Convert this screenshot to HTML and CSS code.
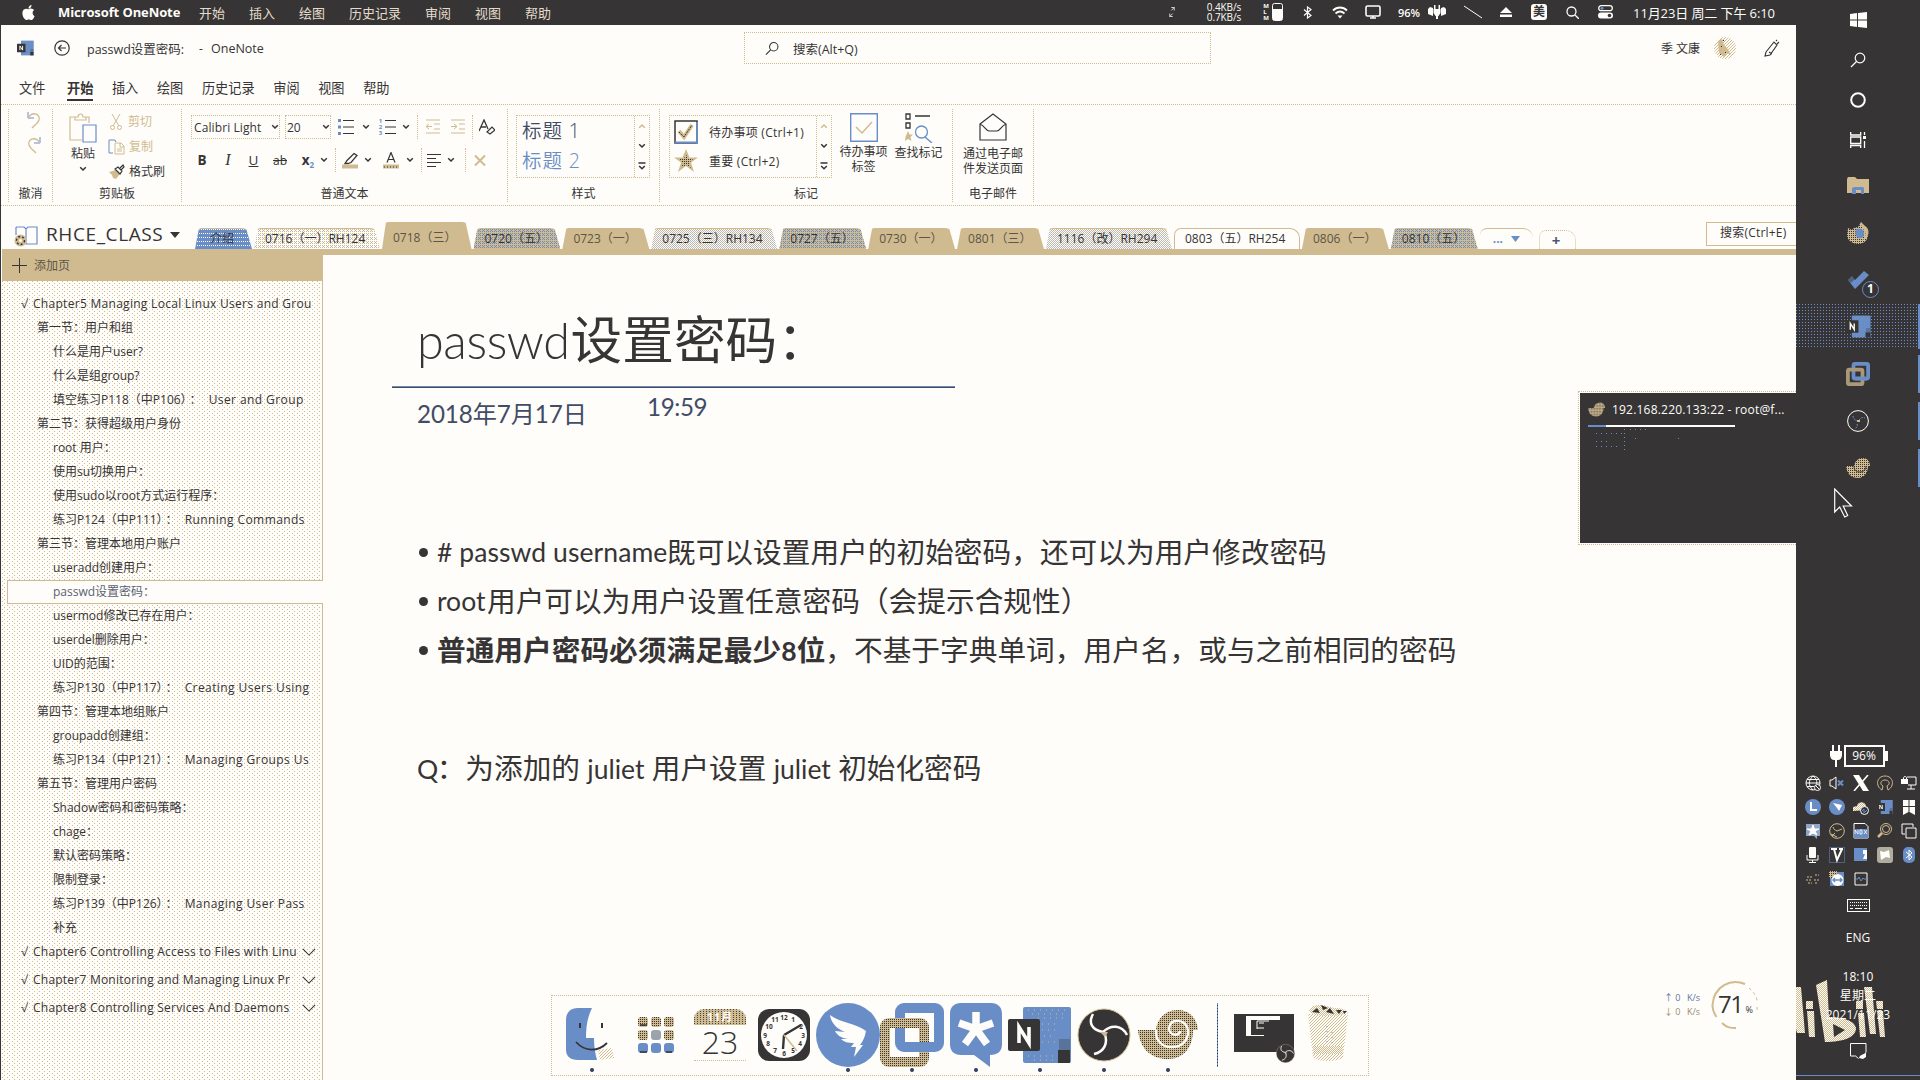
FILE: index.html
```html
<!DOCTYPE html>
<html lang="zh-CN">
<head>
<meta charset="utf-8">
<title>OneNote</title>
<link rel="stylesheet" href="styles.css">
</head>
<body>
<svg class="defs" aria-hidden="true">
  <defs>
    <pattern id="tanDots" width="4" height="4" patternUnits="userSpaceOnUse"><rect width="4" height="4" fill="#d0bb90"/><path d="M0 0h1v1h-1zM2 2h1v1h-1zM2 0h1v1h-1zM0 2h1v1h-1z" fill="#363435"/></pattern>
    <pattern id="tanLight" width="3" height="3" patternUnits="userSpaceOnUse"><path d="M0 0h1v1h-1zM1 2h1v1h-1zM2 1h1v1h-1z" fill="#d0bb90"/></pattern>
    <pattern id="tanMesh" width="2" height="2" patternUnits="userSpaceOnUse"><rect width="2" height="2" fill="#fefdf9"/><path d="M0 0h1v1h-1zM1 1h1v1h-1z" fill="#d0bb90"/></pattern>
  </defs>
  <symbol id="chev" viewBox="0 0 8 6"><path d="M1.2 1.2 4 4l2.800-2.800" fill="none" stroke="currentColor" stroke-width="1.500"/></symbol>
  <symbol id="more" viewBox="0 0 8 9"><path d="M.5 1h7M1.200 4 4 6.800 6.800 4" fill="none" stroke="currentColor" stroke-width="1.500"/></symbol>
  <symbol id="chevWide" viewBox="0 0 16 9"><path d="M1 1l7 7 7-7" fill="none" stroke="currentColor" stroke-width="1.200"/></symbol>
  <symbol id="lens" viewBox="0 0 16 16"><circle cx="10" cy="6" r="4.800" fill="none" stroke="currentColor" stroke-width="1.200"/><path d="M6.500 9.500 1 15" stroke="currentColor" stroke-width="1.300"/></symbol>
  <symbol id="note" viewBox="0 0 64 58"><rect x="15" y="1" width="48" height="56" rx="2" fill="#698ec7"/><path d="M20 4h38M24 8h34M30 12h28M34 18h18M34 24h14M36 30h10M34 36h14M20 50h28M26 54h20" stroke="#d0bb90" stroke-dasharray="1 5"/><path d="M50 44h12v13H50z" fill="#363435"/><path d="M51 33h11v11H51z" fill="#363435" opacity=".3"/><rect y="13" width="32" height="32" rx="2" fill="#363435"/><path d="M11 37V21l10 16V21" fill="none" stroke="#fefdf9" stroke-width="3.600"/></symbol>
  <symbol id="vm" viewBox="0 0 64 64"><rect x="20" y="5" width="39" height="39" rx="4" fill="none" stroke="#698ec7" stroke-width="10"/><rect x="5" y="20" width="39" height="39" rx="4" fill="none" stroke="url(#tanDots)" stroke-width="10"/><path d="M25 44h30" stroke="#698ec7" stroke-width="10"/></symbol>
  <symbol id="obs" viewBox="0 0 54 54"><circle cx="27" cy="27" r="26" fill="#363435" stroke="#d0bb90"/><path d="M16 6c-5 9-1 16 10 18M26 24c8-8 19-7 24 3M27 24c5 11 0 20-10 22" fill="none" stroke="#fefdf9" stroke-width="2.500"/><path d="M23 24h8l-3 5z" fill="#d0bb90"/></symbol>
  <symbol id="shell" viewBox="0 0 60 50"><path d="M0 20h18C19 8 28 0 40 0c11 0 19 8 20 20h-5c0 17-9 29-25 29C13 49 2 39 0 20z" fill="url(#tanDots)"/><path d="M18 20c-1 11 7 18 17 17 9 0 15-7 15-15 0-7-5-12-12-11-6 0-9 8-5 12 3 3 9 2 9-2" fill="none" stroke="#fefdf9" stroke-width="2.400"/></symbol>
  <symbol id="scis" viewBox="0 0 12 16"><path d="M2 0l7 12M10 0 3 12" stroke="currentColor" fill="none"/><circle cx="2.500" cy="13.500" r="2" fill="none" stroke="currentColor"/><circle cx="9.500" cy="13.500" r="2" fill="none" stroke="currentColor"/></symbol>
</svg>

<div class="screen">
  <div class="main">
    <header class="menubar">
      <svg class="apple" viewBox="0 0 24 24"><path fill="#fefdf9" d="M12.152 6.896c-.948 0-2.415-1.078-3.960-1.040-2.040.027-3.910 1.183-4.961 3.014-2.117 3.675-.546 9.103 1.519 12.090 1.013 1.454 2.208 3.090 3.792 3.039 1.520-.065 2.090-.987 3.935-.987 1.831 0 2.350.987 3.960.948 1.637-.026 2.676-1.480 3.676-2.948 1.156-1.688 1.636-3.325 1.662-3.415-.039-.013-3.182-1.221-3.220-4.857-.026-3.040 2.480-4.494 2.597-4.559-1.429-2.090-3.623-2.324-4.390-2.376-2-.156-3.675 1.090-4.610 1.090zM15.530 3.830c.843-1.012 1.400-2.427 1.245-3.830-1.207.052-2.662.805-3.532 1.818-.780.896-1.454 2.338-1.273 3.714 1.338.104 2.715-.688 3.559-1.701"/></svg>
      <b class="appname">Microsoft OneNote</b>
      <nav class="appmenu"><span>开始</span><span>插入</span><span>绘图</span><span>历史记录</span><span>审阅</span><span>视图</span><span>帮助</span></nav>
      <div class="status">
        <svg width="6" height="12" viewBox="0 0 8 14"><path d="M3 1h4v4M7 1 3 5M5 13H1V9M1 13l4-4" fill="none" stroke="#fefdf9"/></svg>
        <span class="net"><span>0.4KB/s</span><span>0.7KB/s</span></span>
        <span class="mlm">M<br>L<br>M</span>
        <svg width="11" height="18" viewBox="0 0 11 18"><rect x=".5" y=".5" width="10" height="17" rx="2" fill="none" stroke="#fefdf9"/><path d="M1 6h9v11H1z" fill="#fefdf9"/></svg>
        <svg width="9" height="13" viewBox="0 0 9 13"><path d="M1 3.500l7 6L4.500 12V1L8 3.500l-7 6" fill="none" stroke="#fefdf9" stroke-width="1.200"/></svg>
        <svg width="16" height="13" viewBox="0 0 16 13"><path d="M1 4.500c4-4 10-4 14 0M3.500 7.500c3-2.600 6-2.600 9 0" fill="none" stroke="#fefdf9" stroke-width="1.800"/><path d="M8 12.500 5.500 9.500h5z" fill="#fefdf9"/></svg>
        <svg width="16" height="14" viewBox="0 0 16 14"><rect x="1" y="1" width="14" height="10" rx="1.500" fill="none" stroke="#fefdf9" stroke-width="1.600"/><path d="M5 13h6M8 11v2" stroke="#fefdf9" stroke-width="1.500"/></svg>
        <span class="pct">96%</span>
        <svg width="18" height="14" viewBox="0 0 18 14"><path d="M0 4l2-2 3 1v8L0 9zM18 4l-2-2-3 1v8l5-2zM5.500 4h7v4l-2 3h-3l-2-3zM6 0h1.500v4H6zM10.500 0H12v4h-1.500zM8 10h2v4H8z" fill="#fefdf9"/></svg>
        <svg width="18" height="14" viewBox="0 0 18 14"><path d="M0 1l18 12" stroke="#fefdf9"/></svg>
        <svg width="12" height="10" viewBox="0 0 12 10"><path d="M6 0l6 6H0zM0 7.500h12V10H0z" fill="#fefdf9"/></svg>
        <span class="ime">美</span>
        <svg width="13" height="13" viewBox="0 0 13 13"><circle cx="5.500" cy="5.500" r="4.500" fill="none" stroke="#fefdf9" stroke-width="1.300"/><path d="M9 9l4 4" stroke="#fefdf9" stroke-width="1.300"/></svg>
        <svg width="15" height="14" viewBox="0 0 15 14"><rect x=".7" y=".7" width="13.600" height="5" rx="2.500" fill="none" stroke="#fefdf9" stroke-width="1.300"/><rect y="7.500" width="15" height="6" rx="3" fill="#fefdf9"/><circle cx="4" cy="3.200" r="1.500" fill="#698ec7"/><circle cx="11.500" cy="10.500" r="1.800" fill="#363435"/></svg>
        <span class="date">11月23日 周二 下午 6:10</span>
      </div>
    </header>

    <div class="titlebar">
      <svg class="t-logo" width="17" height="16" viewBox="0 0 64 58"><use href="#note"/></svg>
      <svg class="t-back" width="16" height="16" viewBox="0 0 16 16"><circle cx="8" cy="8" r="7.200" fill="none" stroke="#363435" stroke-width="1.200"/><path d="M12 8H4.500M7.500 5l-3 3 3 3" fill="none" stroke="#363435" stroke-width="1.200"/></svg>
      <span class="t-doc">passwd设置密码:</span><span class="t-dash">-</span><span class="t-app">OneNote</span>
      <div class="t-search"><svg width="14" height="15"><use href="#lens"/></svg><span>搜索(Alt+Q)</span></div>
      <span class="t-user">季 文康</span>
      <svg class="t-avatar" width="22" height="24" viewBox="0 0 22 24"><circle cx="11" cy="12" r="11" fill="url(#tanLight)"/><path d="M4 5l4-2 2 6 3 3 4 7-4-2-3 4-5-4z" fill="#d0bb90"/><path d="M7 10h1v1h-1zM11 16h1v1h-1zM6 18h1v1h-1zM9 4h1v1h-1z" fill="#363435"/></svg>
      <svg class="t-pen" width="17" height="18" viewBox="0 0 17 18"><path d="M2 13 10 3l3 3-7 10-5 1zM5 13l3 2M12 1l1 1M15 3l-2 2" fill="none" stroke="#363435" stroke-width="1.100"/></svg>
    </div>

    <nav class="tabs"><span>文件</span><span class="on">开始</span><span>插入</span><span>绘图</span><span>历史记录</span><span>审阅</span><span>视图</span><span>帮助</span></nav>

    <section class="ribbon">
      <div class="grp">
        <div class="body undo">
          <svg width="16" height="18" viewBox="0 0 16 18"><path d="M2 1v6h6" fill="none" stroke="#698ec7"/><path d="M2 7c5-8 13-3 11 2-1 3-4 5-7 8" fill="none" stroke="#d0bb90" stroke-width="1.300"/></svg>
          <svg width="16" height="18" viewBox="0 0 16 18"><path d="M14 1v6H8" fill="none" stroke="#698ec7"/><path d="M14 7C9-1 1 4 3 9c1 3 4 5 7 8" fill="none" stroke="#d0bb90" stroke-width="1.300"/></svg>
        </div>
        <div class="label">撤消</div>
      </div>
      <div class="grp">
        <div class="body clip">
          <div class="big"><svg width="28" height="31" viewBox="0 0 28 31"><path d="M7 4H1v23h12M20 10V4h-5M6 7V4h3c0-4 5-4 5 0h3v3z" fill="none" stroke="#d0bb90" stroke-width="1.200"/><path d="M14 12h13v17H14z" fill="#fefdf9" stroke="#698ec7" stroke-width="1.200"/></svg><span>粘贴</span><svg class="chev"><use href="#chev"/></svg></div>
          <div class="list">
            <div class="off"><svg width="16" height="16" viewBox="-2 0 16 16"><use href="#scis" width="12" height="16"/></svg>剪切</div>
            <div class="off"><svg width="17" height="16" viewBox="0 0 17 16"><path d="M5 14H1V1h6l1 2" fill="none" stroke="#698ec7"/><path d="M7 4h6l3 3v8H7zM12 4v4h4M9 10h5M9 12h5" fill="none" stroke="#d0bb90"/></svg>复制</div>
            <div><svg width="17" height="16" viewBox="0 0 17 16"><path d="M1 8l7-2 4 4-4 5-3-1-1-3z" fill="#d0bb90"/><path d="M7 5l5 5 2-3-4-4zM12 4l3-3 1 2-3 3" fill="#fefdf9" stroke="#363435" stroke-width="1.200"/></svg>格式刷</div>
          </div>
        </div>
        <div class="label">剪贴板</div>
      </div>
      <div class="grp">
        <div class="body text">
          <div class="row r1">
            <div class="combo font"><span>Calibri Light</span><svg class="chev"><use href="#chev"/></svg></div>
            <div class="combo size"><span>20</span><svg class="chev"><use href="#chev"/></svg></div>
            <svg class="ic" viewBox="0 0 16 16"><path d="M0 0h3v3H0zM0 6.500h3v3H0zM0 13h3v3H0z" fill="#698ec7"/><path d="M5 1.500h11M5 8h11M5 14.500h11" stroke="#363435"/></svg>
            <svg class="chev"><use href="#chev"/></svg>
            <div class="nums"><span>1<br>2<br>3</span><svg width="11" height="16" viewBox="0 0 11 16"><path d="M0 1.500h11M0 8h11M0 14.500h11" stroke="#363435"/></svg></div>
            <svg class="chev"><use href="#chev"/></svg>
            <i></i>
            <svg class="ic" viewBox="0 0 16 16"><path d="M1 1h14M9 5h6M9 10h6M1 14h14M7 7.500H1M4 5 1 7.500 4 10" fill="none" stroke="#d0bb90"/></svg>
            <svg class="ic" viewBox="0 0 16 16"><path d="M1 1h14M9 5h6M9 10h6M1 14h14M1 7.500h6M4 5l3 2.500L4 10" fill="none" stroke="#d0bb90"/></svg>
            <i></i>
            <svg class="ic" viewBox="0 0 16 16"><path d="M0 12 5 1l4 9M2 8h5" fill="none" stroke="#363435" stroke-width="1.300"/><path d="M8 13l5-5 3 3-5 4z" fill="none" stroke="#363435" stroke-width="1.200"/></svg>
          </div>
          <div class="row r2">
            <b>B</b><em>I</em><u>U</u><s>ab</s><b class="sub">x<small>2</small></b><svg class="chev"><use href="#chev"/></svg>
            <i></i>
            <svg class="ic" viewBox="0 0 16 16"><path d="M5 8l7-7 3 2-6 7-3 1-3 0z" fill="none" stroke="#363435" stroke-width="1.300"/><path d="M0 12h16v4H0z" fill="#d0bb90"/></svg>
            <svg class="chev"><use href="#chev"/></svg>
            <svg class="ic" viewBox="0 0 16 16"><path d="M4 10 8 0l4 10M5.500 7h5" fill="none" stroke="#363435" stroke-width="1.200"/><path d="M0 12h16v4H0z" fill="#d0bb90"/><path d="M1 14.500h14" stroke="#363435" stroke-dasharray="1 2"/></svg>
            <svg class="chev"><use href="#chev"/></svg>
            <i></i>
            <svg class="ic" viewBox="0 0 16 16"><path d="M1 2h14M1 6h9M1 10h14M1 14h9" stroke="#363435" stroke-width="1.200"/></svg>
            <svg class="chev"><use href="#chev"/></svg>
            <i></i>
            <svg class="ic x" viewBox="0 0 16 16"><path d="M3 3l10 10M13 3 3 13" stroke="#d0bb90" stroke-width="2"/></svg>
          </div>
        </div>
        <div class="label">普通文本</div>
      </div>
      <div class="grp">
        <div class="body pad">
          <div class="gallery styles">
            <div class="opts"><span class="h1">标题 1</span><span class="h2">标题 2</span></div>
            <div class="scroll"><svg class="chev up"><use href="#chev"/></svg><svg class="chev"><use href="#chev"/></svg><svg class="mr"><use href="#more"/></svg></div>
          </div>
        </div>
        <div class="label">样式</div>
      </div>
      <div class="grp">
        <div class="body pad marks">
          <div class="gallery tags">
            <div class="opts">
              <span><svg width="24" height="24" viewBox="0 0 24 24"><path d="M1 1h22v22H1z" fill="none" stroke="#363435" stroke-width="1.500"/><path d="M1 22.500h22V2" fill="none" stroke="#698ec7" stroke-width="1.800"/><path d="M5 11l5 6 8-12" fill="none" stroke="#d0bb90" stroke-width="4"/><path d="M5 12l5 5 8-12" fill="none" stroke="#363435" stroke-dasharray="2 1"/></svg>待办事项 (Ctrl+1)</span>
              <span><svg width="24" height="24" viewBox="0 0 24 24"><path d="M12 0l3.500 8.500H24l-7 5 3 9.500-8-6-8 6 3-9.500-7-5h8.500z" fill="#d0bb90"/><path d="M12 5l2 5h5l-4 4 2 5-5-3-5 3 2-5-4-4h5z" fill="url(#tanDots)"/></svg>重要 (Ctrl+2)</span>
            </div>
            <div class="scroll"><svg class="chev up"><use href="#chev"/></svg><svg class="chev"><use href="#chev"/></svg><svg class="mr"><use href="#more"/></svg></div>
          </div>
          <div class="big"><svg width="28" height="29" viewBox="0 0 28 29"><path d="M.7.700h26.600v27.600H.7z" fill="none" stroke="#698ec7" stroke-width="1.400"/><path d="M6 14l6 6L22 9" fill="none" stroke="#d0bb90" stroke-width="1.500"/></svg><span>待办事项<br>标签</span></div>
          <div class="big"><svg width="28" height="30" viewBox="0 0 28 30"><path d="M1 1h4v5H1zM1 10h4v5H1zM10 3h15" fill="none" stroke="#363435" stroke-width="1.300"/><path d="M3 18l1.500 3.500H8L5.500 24l1 4L3 26l-3 2 .5-4z" fill="#d0bb90"/><circle cx="16.500" cy="19" r="6" fill="none" stroke="#698ec7" stroke-width="1.300"/><path d="M20 24l7 6" stroke="#698ec7" stroke-width="1.400"/></svg><span>查找标记</span></div>
        </div>
        <div class="label">标记</div>
      </div>
      <div class="grp">
        <div class="body mail">
          <div class="big"><svg width="28" height="28" viewBox="0 0 28 28"><path d="M1 11 14 1l13 10v16H1zM1 11c5 2 6 7 9 7h8c3 0 4-5 9-7" fill="none" stroke="#363435" stroke-width="1.200"/></svg><span>通过电子邮<br>件发送页面</span></div>
        </div>
        <div class="label">电子邮件</div>
      </div>
    </section>

    <div class="strip">
      <div class="book">
        <svg width="25" height="23" viewBox="0 0 25 23"><path d="M2 3h8l2 2 2-2h9v17H12V5M2 3v8" fill="none" stroke="#698ec7" stroke-width="1.200"/><circle cx="6.500" cy="16.500" r="6" fill="#d0bb90"/><circle cx="6.500" cy="16.500" r="4" fill="none" stroke="#363435" stroke-width="1.400" stroke-dasharray="2 2"/><circle cx="6.500" cy="16.500" r="1.500" fill="#fefdf9"/></svg>
        <span>RHCE_CLASS</span><svg width="10" height="6" viewBox="0 0 10 6"><path d="M0 0h10L5 6z" fill="#363435"/></svg>
      </div>
      <div class="sections">
        <span class="tab w1 blue"><em>介绍</em></span>
        <span class="tab w3 mix"><em>0716（一）RH124</em></span>
        <span class="tab w2 tan on"><em>0718（三）</em></span>
        <span class="tab w2 slate"><em>0720（五）</em></span>
        <span class="tab w2 tan"><em>0723（一）</em></span>
        <span class="tab w3 mix2"><em>0725（三）RH134</em></span>
        <span class="tab w2 slate"><em>0727（五）</em></span>
        <span class="tab w2 tan"><em>0730（一）</em></span>
        <span class="tab w2 tan"><em>0801（三）</em></span>
        <span class="tab w3 mix2"><em>1116（改）RH294</em></span>
        <span class="tab w3 plain"><em>0803（五）RH254</em></span>
        <span class="tab w2 tan"><em>0806（一）</em></span>
        <span class="tab w2 slate"><em>0810（五）</em></span>
        <span class="tab dots"><em>...</em><svg width="9" height="6" viewBox="0 0 9 6"><path d="M0 0h9L4.500 6z" fill="#698ec7"/></svg></span>
        <span class="tab plus"><em>+</em></span>
      </div>
      <div class="psearch">搜索(Ctrl+E)</div>
    </div>

    <div class="work">
      <aside class="pages">
        <div class="add"><svg width="15" height="15" viewBox="0 0 15 15"><path d="M7.500 0v15M0 7.500h15" stroke="#363435"/></svg>添加页</div>
        <ul>
          <li class="l1"><i>√</i>Chapter5 Managing Local Linux Users and Grou</li>
          <li class="l2">第一节：用户和组</li>
          <li>什么是用户user?</li>
          <li>什么是组group?</li>
          <li>填空练习P118（中P106）<span class="co">：</span><span class="en">User and Group</span></li>
          <li class="l2">第二节：获得超级用户身份</li>
          <li>root 用户：</li>
          <li>使用su切换用户：</li>
          <li>使用sudo以root方式运行程序：</li>
          <li>练习P124（中P111）<span class="co">：</span><span class="en">Running Commands</span></li>
          <li class="l2">第三节：管理本地用户账户</li>
          <li>useradd创建用户：</li>
          <li class="sel">passwd设置密码：</li>
          <li>usermod修改已存在用户：</li>
          <li>userdel删除用户：</li>
          <li>UID的范围：</li>
          <li>练习P130（中P117）<span class="co">：</span><span class="en">Creating Users Using</span></li>
          <li class="l2">第四节：管理本地组账户</li>
          <li>groupadd创建组：</li>
          <li>练习P134（中P121）<span class="co">：</span><span class="en">Managing Groups Us</span></li>
          <li class="l2">第五节：管理用户密码</li>
          <li>Shadow密码和密码策略：</li>
          <li>chage：</li>
          <li>默认密码策略：</li>
          <li>限制登录：</li>
          <li>练习P139（中P126）<span class="co">：</span><span class="en">Managing User Pass</span></li>
          <li>补充</li>
          <li class="l1 ch"><i>√</i>Chapter6 Controlling Access to Files with Linu<svg class="cw"><use href="#chevWide"/></svg></li>
          <li class="l1 ch"><i>√</i>Chapter7 Monitoring and Managing Linux Pr<svg class="cw"><use href="#chevWide"/></svg></li>
          <li class="l1 ch"><i>√</i>Chapter8 Controlling Services And Daemons<svg class="cw"><use href="#chevWide"/></svg></li>
        </ul>
      </aside>
      <article class="page">
        <h1><span class="lt">passwd</span>设置密码：</h1>
        <div class="stamp"><span class="d">2018年7月17日</span><span class="h">19:59</span></div>
        <ul class="bul">
          <li><span class="a1"># passwd username</span>既可以设置用户的初始密码，还可以为用户修改密码</li>
          <li><span class="a2">root</span>用户可以为用户设置任意密码（会提示合规性）</li>
          <li><b>普通用户密码必须满足最少<span class="a3">8</span>位</b>，不基于字典单词，用户名，或与之前相同的密码</li>
        </ul>
        <p class="q"><span class="a4">Q</span>：为添加的 <span class="a5">juliet</span> 用户设置 <span class="a5">juliet</span> 初始化密码</p>
      </article>
    </div>
  </div>

  <aside class="taskbar">
    <div class="top">
      <span><svg width="17" height="16" viewBox="0 0 17 16"><path d="M0 2l7-1v6.500H0zM8 1l9-1v7.500H8zM0 8.500h7V15l-7-1zM8 8.500h9V16l-9-1z" fill="#fefdf9"/></svg></span>
      <span><svg class="w" width="16" height="16"><use href="#lens"/></svg></span>
      <span><svg width="16" height="16" viewBox="0 0 16 16"><circle cx="8" cy="8" r="6.800" fill="none" stroke="#fefdf9" stroke-width="2"/></svg></span>
      <span><svg width="16" height="16" viewBox="0 0 16 16"><path d="M.7 5h10v6.500H.7zM.7 0v3h10V0M.7 16v-2.500h10V16M14.500 0v3M14.500 9v7" fill="none" stroke="#fefdf9" stroke-width="1.300"/><path d="M13 4h3v3h-3z" fill="#fefdf9"/></svg></span>
    </div>
    <div class="apps">
      <span><svg width="22" height="19" viewBox="0 0 22 19"><path d="M1 1h7l2 2h12v14H0V3z" fill="#d0bb90"/><path d="M5 18v-6l2-1h9l1 1v6h-3v-4H9v4z" fill="#698ec7"/></svg></span>
      <span><svg width="22" height="24" viewBox="0 0 22 24"><path d="M1 7l4 2c1-2 4-3 6-3L14 1c2 5 8 8 7 14s-6 8-10 8S0 20 0 14z" fill="url(#tanDots)"/><path d="M9 8c5-2 9 2 8 6s-5 4-7 2l-2-4z" fill="#698ec7"/><path d="M14 1c0 5 1 6 4 9 1 3 0 6-2 9 8-4 6-12 2-14z" fill="#d0bb90"/></svg></span>
      <span class="todo"><svg width="22" height="19" viewBox="0 0 22 19"><path d="M1 10l4-4 3 4L17 1l5 4L8 19z" fill="#698ec7"/><path d="M1 10l4-4 3 3-4 4z" fill="#363435" opacity=".5"/></svg><b>1</b></span>
      <span class="act bar"><svg width="25" height="23"><use href="#note"/></svg></span>
      <span class="bar"><svg width="24" height="24"><use href="#vm"/></svg></span>
      <span class="bar"><svg width="22" height="22" viewBox="0 0 22 22"><circle cx="11" cy="11" r="10.400" fill="none" stroke="#fefdf9"/><path d="M6 6c0 3 2 4 5 5M12 10c3-3 4-3 6-2M10 14c1 2 0 3-2 5" fill="none" stroke="#698ec7" stroke-dasharray="2 1"/><path d="M10 10h3v2h-3z" fill="#d0bb90"/></svg></span>
      <span class="bar"><svg width="24" height="20" viewBox="0 0 24 20"><path d="M0 8h8c1-5 4-8 9-8 4 0 7 3 7 8h-2c0 7-4 12-10 12C5 20 1 16 0 8z" fill="url(#tanDots)"/><path d="M8 8c0 4 2 6 6 6s6-3 6-6" fill="none" stroke="#363435"/></svg></span>
    </div>
    <div class="tray">
      <div class="bat"><svg width="12" height="22" viewBox="0 0 12 22"><path d="M2 0h2v6h4V0h2v6h2v4c0 3-2 5-4 5H7v7H5v-7H4c-2 0-4-2-4-5V6h2z" fill="#fefdf9"/></svg><span>96%</span></div>
      <div class="icons">
        <svg viewBox="0 0 16 16"><circle cx="8" cy="8" r="7" fill="none" stroke="#fefdf9"/><path d="M1 8h14M2 4.500h12M2 11.500h7M8 1c-5 5-5 9 0 14M8 1c4 3 4 6 3.500 8" fill="none" stroke="#fefdf9"/><circle cx="12.500" cy="12.500" r="3" fill="#363435" stroke="#fefdf9"/><path d="M10.500 10.500l4 4" stroke="#fefdf9"/></svg>
        <svg viewBox="0 0 16 16"><path d="M1 5h2l4-3v12l-4-3H1z" fill="none" stroke="#fefdf9"/><path d="M9 5.500l5 5M14 5.500l-5 5" stroke="#698ec7" stroke-width="2"/></svg>
        <svg viewBox="0 0 16 16"><path d="M0 0h6l10 16h-6z" fill="#fefdf9"/><path d="M15 0 9 7M7 9l-6 7" stroke="#fefdf9" stroke-width="1.600"/></svg>
        <svg viewBox="0 0 16 16"><path d="M5 15C-2 11-.500 1 8 1s10 10 3 14l-1-4c4-2 2-6-2-6s-6 4-2 6z" fill="none" stroke="#d0bb90"/></svg>
        <svg viewBox="0 0 16 16"><path d="M6 2h9v8H7M10 10v4M6 14h8M2.500 5V3c0-2 3-2 3 0v2" fill="none" stroke="#fefdf9"/><path d="M0 4h7v5H0z" fill="#fefdf9"/></svg>
        <svg viewBox="0 0 16 16"><circle cx="8" cy="8" r="8" fill="#698ec7"/><path d="M6 3v8h6" fill="none" stroke="#fefdf9" stroke-width="2"/></svg>
        <svg viewBox="0 0 16 16"><circle cx="8" cy="8" r="8" fill="#698ec7"/><path d="M4 4l9 2-3 6-2-3z" fill="#fefdf9"/></svg>
        <svg viewBox="0 0 16 16"><path d="M0 12V8l4-1c1-5 8-5 9 0l1 4z" fill="url(#tanMesh)"/><circle cx="11.500" cy="11.500" r="4" fill="#363435" stroke="#fefdf9"/><path d="M9 12l2-2v4l3-3" fill="none" stroke="#698ec7"/></svg>
        <svg viewBox="0 0 64 58"><use href="#note"/></svg>
        <svg viewBox="0 0 16 16"><path d="M2 1h5.500v6H2zM8.500 1H14v6H8.500zM2 8h5.500v5L2 16zM8.500 8H14v8l-5.500-3z" fill="#fefdf9"/></svg>
        <svg viewBox="0 0 16 16"><path d="M1 1h14v12h-3v3l-3-3H1z" fill="#8fa6c8"/><path d="M8 2l1.500 4H14l-4 2 2 4-4-2-4 2 2-4-4-2h4.500z" fill="#fefdf9" stroke="#fefdf9"/></svg>
        <svg viewBox="0 0 16 16"><circle cx="8" cy="8" r="7.300" fill="none" stroke="#d0bb90"/><path d="M4 4c1 3 2 3 4 4l5-2M2 11l6 3M3 13l3-3" fill="none" stroke="#d0bb90"/></svg>
        <svg viewBox="0 0 16 16"><path d="M1 .500h11l3 3V15H1z" fill="none" stroke="#fefdf9"/><path d="M1 6h14v9H1z" fill="#698ec7"/><path d="M2 11V7l3 4V7M7 7h2v4H7zM11 7l3 4M14 7l-3 4" fill="none" stroke="#fefdf9" stroke-width=".8"/></svg>
        <svg viewBox="0 0 16 16"><circle cx="9" cy="6" r="5.500" fill="none" stroke="#d0bb90"/><circle cx="9" cy="6" r="3.500" fill="none" stroke="#d0bb90"/><path d="M5 10l-4 4" stroke="#d0bb90" stroke-width="2.500"/></svg>
        <svg viewBox="0 0 16 16"><path d="M4 11H1V1h11v3M5 5h10v10H5z" fill="none" stroke="#fefdf9"/></svg>
        <svg viewBox="0 0 16 16"><rect x="4" y="0" width="7" height="11" rx="1" fill="#fefdf9"/><path d="M2 8v5h11V8M7.500 13v3M4 15.500h7" fill="none" stroke="#fefdf9"/></svg>
        <svg viewBox="0 0 16 16"><rect x=".5" y=".5" width="15" height="15" fill="none" stroke="#698ec7" stroke-dasharray="1 1"/><path d="M2 2h6M5 2l3 11 5-11M10 2h4" fill="none" stroke="#fefdf9" stroke-width="2"/></svg>
        <svg viewBox="0 0 16 16"><path d="M1 1h13v13H1z" fill="#698ec7"/><path d="M10 3h4v9h-4l2-5h-2z" fill="#fefdf9"/></svg>
        <svg viewBox="0 0 16 16"><rect width="16" height="16" rx="3" fill="#b0ad9f"/><path d="M3 4l4 1 5-2 1 8-4-1-5 3z" fill="#fefdf9"/></svg>
        <svg viewBox="0 0 16 16"><rect x="2" width="12" height="16" rx="5" fill="#698ec7"/><path d="M5 5l6 5-3 3V3l3 3-6 5" fill="none" stroke="#fefdf9"/></svg>
        <svg viewBox="0 0 16 16"><path d="M2 6h5M10 4h4M1 9h6M9 9h5M3 12h4M10 12h3" stroke="#d0bb90" stroke-dasharray="2 1"/></svg>
        <svg viewBox="0 0 16 16"><path d="M1 1h14v14H1z" fill="#698ec7"/><circle cx="8.500" cy="9" r="6" fill="#fefdf9"/><path d="M4 9h9M6 7 4 9l2 2M11 7l2 2-2 2" fill="none" stroke="#698ec7" stroke-width="1.500"/><path d="M0 0h8v4H4v3H0z" fill="url(#tanDots)"/></svg>
        <svg viewBox="0 0 16 16"><path d="M2 2h12v12H2z" fill="none" stroke="#fefdf9"/><path d="M3 8h2l1-2 2 4 2-3 1 1h3" fill="none" stroke="#698ec7"/></svg>
      </div>
      <svg class="kb" width="23" height="13" viewBox="0 0 23 13"><rect x=".5" y=".5" width="22" height="12" fill="none" stroke="#fefdf9"/><path d="M3 3.500h17M3 6.500h17" stroke="#fefdf9" stroke-dasharray="1 1"/><path d="M3 9.500h3M8 9.500h7M17 9.500h3" stroke="#fefdf9"/></svg>
      <div class="eng">ENG</div>
      <div class="clock"><span>18:10</span><span>星期二</span><span>2021/11/23</span></div>
      <svg class="act-c" width="17" height="16" viewBox="0 0 17 16"><path d="M.5.500h15.500v9M.5.500v12.500h5l3 2.500" fill="none" stroke="#fefdf9"/><path d="M9 15c1-4 5-3 7-6v5l-3 2z" fill="#fefdf9"/></svg>
    </div>
    <svg class="mark" width="92" height="66" viewBox="0 0 92 66"><g fill="url(#tanMesh)"><path d="M0 8h5l4 46H1L0 50zM10 22h7v8h-7zM11 32h7l1 26h-6zM20 6l11-5 2 37c14 0 26 4 27 11 0 9-12 14-31 14zM62 34h6l2 24h-6zM68 8h8l4 47h-6zM60 22h7v8h-7zM80 22h7v8h-6zM81 32h6l2 26h-5z"/></g><path d="M37 45l12 6-11 7z" fill="#363435"/></svg>
  </aside>

  <div class="popup">
    <div class="p-head"><svg width="17" height="15" viewBox="0 0 24 20"><path d="M0 8h8c1-5 4-8 9-8 4 0 7 3 7 8h-2c0 7-4 12-10 12C5 20 1 16 0 8z" fill="url(#tanDots)"/></svg><span>192.168.220.133:22 - root@f...</span></div>
    <div class="p-line"></div>
    <svg class="p-term" width="110" height="26" viewBox="0 0 110 26"><path d="M0 5.500h28M0 13.500h12M0 18.500h22M34 1.500h20M39 10.500h2M82 10.500h2" stroke="#698ec7" stroke-dasharray="1 4"/><path d="M28.500 1v24" stroke="#698ec7" stroke-dasharray="1 3"/></svg>
  </div>

  <svg class="cursor" width="19" height="31" viewBox="0 0 19 31"><path d="M.7 1v23l5-5 5 10 3-1.500-4.500-9.500H17.500z" fill="#363435" stroke="#fefdf9" stroke-width="1.200"/></svg>

  <div class="meter">
    <div class="kps"><span class="upl">↑ 0<em>K/s</em></span><span class="dnl">↓ 0<em>K/s</em></span></div>
    <div class="ring"><svg width="48" height="50" viewBox="0 0 48 50"><path d="M34 4C20-2 3 6 1.500 25c0 5 2 9 4 12M11 43c5 5 9 5 14 5" fill="none" stroke="#d0bb90" stroke-width="2"/><path d="M38 8c5 4 8 9 8 13M46 27v4" fill="none" stroke="#d0bb90" stroke-dasharray="3 3"/></svg><span>71<small>%</small></span></div>
  </div>

  <div class="dock">
    <span class="run"><svg width="52" height="54" viewBox="0 0 52 54"><path d="M12 0h14c-5 10-6 20-6 30h8c0 8 1 15 3 22H12C4 52 0 48 0 42V12C0 5 4 0 12 0z" fill="#698ec7"/><path d="M14 15v5M36 15v5" stroke="#363435" stroke-width="2"/><path d="M10 34c9 10 22 10 31 1" fill="none" stroke="#363435" stroke-width="1.800"/><path d="M32 42l14-2 2 10-14 2z" fill="url(#tanLight)"/></svg></span>
    <span><svg width="36" height="36" viewBox="0 0 36 36"><g fill="url(#tanDots)"><rect width="10" height="10" rx="3"/><rect x="13" width="10" height="10" rx="3"/><rect x="26" width="10" height="10" rx="3"/><rect y="13" width="10" height="10" rx="3"/><rect x="26" y="13" width="10" height="10" rx="3"/></g><rect x="13" y="13" width="10" height="10" rx="3" fill="#9ba4ab"/><g fill="#698ec7"><rect y="26" width="10" height="10" rx="3"/><rect x="13" y="26" width="10" height="10" rx="3"/><rect x="26" y="26" width="10" height="10" rx="3"/></g><path d="M2 8h7M2 35h7M28 35h6" stroke="#363435" stroke-width="1.500"/></svg></span>
    <span><div class="cal"><b>11月</b><i>23</i></div></span>
    <span><svg width="52" height="52" viewBox="0 0 52 52"><rect width="52" height="52" rx="11" fill="#363435"/><circle cx="26" cy="26" r="23" fill="#fefdf9"/><g font-family="Open Sans" font-size="6.500" font-weight="700" fill="#363435" text-anchor="middle"><text x="26" y="11">12</text><text x="35" y="13">1</text><text x="43" y="20">2</text><text x="45" y="29">3</text><text x="42" y="37">4</text><text x="35" y="44">5</text><text x="26" y="47">6</text><text x="17" y="44">7</text><text x="10" y="37">8</text><text x="7" y="29">9</text><text x="11" y="20">10</text><text x="17" y="13">11</text></g><path d="M26 26 43 16M26 26l-1 14" stroke="#363435" stroke-width="2.400"/><path d="M26 26l13 16" stroke="#d0bb90" stroke-width="1.500"/></svg></span>
    <span class="run"><svg width="64" height="64" viewBox="0 0 64 64"><circle cx="32" cy="32" r="32" fill="#698ec7"/><path d="M14 12c10 8 26 8 36 16-1 6-3 10-6 14h3l-9 12 2-10h-5l3-4c-6 0-10-1-13-4h7c-7-1-11-4-13-8l10 1c-8-3-14-9-15-17z" fill="#fefdf9"/></svg></span>
    <span class="run"><svg width="64" height="64"><use href="#vm"/></svg></span>
    <span class="run"><svg width="52" height="64" viewBox="0 0 52 64"><path d="M11 0h30c7 0 11 4 11 11v30c0 7-4 11-12 11v12L24 52H11C4 52 0 48 0 41V11C0 4 4 0 11 0z" fill="#698ec7"/><path d="M26 9v17M26 26l17-6M26 26l11 15M26 26 15 41M26 26 9 20" stroke="#fefdf9" stroke-width="7.500"/></svg></span>
    <span class="run"><svg width="64" height="58"><use href="#note"/></svg></span>
    <span class="run"><svg width="54" height="54"><use href="#obs"/></svg></span>
    <span class="run"><svg width="60" height="50"><use href="#shell"/></svg></span>
    <hr>
    <span class="shot"><svg width="61" height="50" viewBox="0 0 61 50"><path d="M0 1h60v38H0z" fill="#363435"/><path d="M12 3h34v4H17v15h13v1H12z" fill="#fefdf9"/><path d="M23 16V8h12M23 15h7M25 10h5" fill="none" stroke="#fefdf9"/><svg x="42" y="31" width="19" height="19"><use href="#obs"/></svg></svg></span>
    <span class="trash"><svg width="42" height="58" viewBox="0 0 42 58"><path d="M1 10h40l-5 44c-6 4-24 4-30 0z" fill="url(#tanLight)"/><path d="M6 42h30l-1 8H7z" fill="url(#tanMesh)"/><path d="M2 7c2-6 8-6 12-6 5 0 8 2 13 3 5 0 9 0 14 4-3 5-36 6-39-1z" fill="url(#tanMesh)"/><path d="M5 8l5-4 3 5zM14 1l7 3-5 2zM19 8l4-4 4 6zM29 6l6 0-3 4zM36 7l4 0-3 3z" fill="#363435"/><path d="M20 22v16M25 28v12" stroke="#698ec7" stroke-dasharray="1 4"/></svg></span>
  </div>
</div>
</body>
</html>
```
FILE: styles.css
```css
:root { --bg: #fefdf9; --ink: #363435; --tan: #d0bb90; --blue: #698ec7; }
* { box-sizing: border-box; }
body { margin: 0; background: var(--bg); color: var(--ink); font-family: "Open Sans", "Noto Sans CJK SC", sans-serif; font-size: 12px; }
ul { list-style: none; margin: 0; padding: 0; }
svg { display: block; flex: none; }
.defs { position: absolute; width: 0; height: 0; }
.screen { position: relative; display: flex; width: 1920px; height: 1080px; overflow: hidden; white-space: nowrap; }
.main { width: 1796px; display: flex; flex-direction: column; border-left: 1px solid var(--ink); }
.chev { width: 8px; height: 6px; }

.menubar { height: 25px; background: var(--ink); color: var(--bg); display: flex; align-items: center; padding: 0 0 1px 21px; font-size: 13px; margin-left: -1px; }
.apple { width: 15px; height: 15px; }
.appname { margin-left: 22px; width: 141px; letter-spacing: -.1px; }
.appmenu { display: flex; gap: 24px; color: #e3dccb; }
.status { margin-left: auto; margin-right: 16px; display: grid; grid-template-columns: 24px 80px 4px 18px 42px 24px 42px 30px 26px 46px 20px 46px 20px 46px 152px; align-items: center; justify-items: center; }
.net { display: flex; flex-direction: column; font-size: 10px; line-height: 10px; letter-spacing: -.1px; }
.mlm { font-size: 6px; line-height: 6px; font-weight: 700; }
.pct { font-size: 11px; font-weight: 600; }
.ime { background: var(--bg); color: var(--ink); border-radius: 3px; width: 16px; height: 16px; font-size: 12px; line-height: 16px; text-align: center; font-weight: 700; }
.date { font-size: 13px; letter-spacing: -.1px; }

.titlebar { height: 48px; display: flex; align-items: center; padding: 0 0 2px 16px; }
.t-back { margin-left: 20px; }
.t-doc { margin-left: 17px; width: 112px; font-size: 12.500px; }
.t-dash { width: 12px; }
.t-app { width: 533px; font-size: 12.500px; }
.t-search { width: 467px; height: 32px; border: 1px dotted var(--tan); display: flex; align-items: center; padding-left: 20px; gap: 14px; font-size: 12.500px; }
.t-user { margin-left: 450px; width: 53px; }
.t-pen { margin-left: 28px; }

.tabs { height: 32px; border-bottom: 1px dotted var(--tan); display: flex; padding: 5px 0 0 18px; gap: 18.600px; font-size: 13.200px; line-height: 20px; }
.tabs span { flex: none; }
.tabs span:first-child { margin-right: 3px; }
.tabs .on { font-weight: 700; border-bottom: 2px solid var(--ink); height: 23px; }

.ribbon { height: 101px; border-bottom: 1px dotted var(--tan); display: grid; grid-template-columns: 45px 129px 326px 152px 293px 81px; padding: 4px 0 5px 7px; }
.grp { border-right: 1px dotted var(--tan); display: flex; flex-direction: column; }
.grp:first-child { border-left: 1px dotted var(--tan); }
.body { height: 76px; display: flex; }
.label { text-align: center; line-height: 17px; }
.undo { flex-direction: column; align-items: center; padding: 2px 0 0 6px; gap: 7px; }
.clip { padding-left: 14px; }
.big { display: flex; flex-direction: column; align-items: center; padding-top: 4px; text-align: center; line-height: 15px; }
.big span { margin-top: 2px; }
.clip .big { width: 32px; }
.clip .big .chev { margin-top: 5px; }
.clip .list { margin-left: 9px; display: flex; flex-direction: column; }
.clip .list div { display: flex; align-items: center; gap: 4px; height: 26px; line-height: 20px; }
.off { color: var(--tan); }
.text { flex-direction: column; padding: 6px 0 0 9px; }
.row { display: grid; align-items: center; justify-items: center; justify-content: start; }
.r1 { height: 24px; grid-template-columns: 94px 51px 20px 20px 23px 14px 8px 24px 25px 4px 26px; }
.r2 { height: 24px; margin-top: 9px; grid-template-columns: 22px 30px 21px 32px 24px 8px 14px 15px 22px 24px 14px 8px 18px 16px 12px 18px; font-size: 13.500px; }
.row i { width: 0; height: 24px; border-left: 1px dotted var(--tan); }
.ic { width: 16px; height: 16px; }
.r2 .ic { height: 17px; }
.r2 em { font-family: "Liberation Serif", serif; font-size: 16px; }
.r2 s { font-size: 12px; }
.sub small { font-size: 8px; color: var(--blue); vertical-align: -3px; }
.combo { height: 24px; border: 1px dotted var(--tan); display: flex; align-items: center; justify-content: space-between; padding-left: 2px; justify-self: start; }
.combo.font { width: 89px; letter-spacing: .1px; }
.combo.size { width: 46px; padding-left: 1px; }
.nums { display: flex; gap: 3px; align-items: center; }
.nums span { font-size: 6px; line-height: 6px; color: var(--blue); font-weight: 700; }
.pad { padding: 6px 0 0 8px; }
.gallery { height: 63px; border: 1px dotted var(--tan); display: flex; flex: none; }
.styles { width: 134px; }
.tags { width: 163px; margin-left: 1px; }
.opts { flex: 1; display: flex; flex-direction: column; }
.styles .opts { padding-left: 5px; font-size: 19.500px; line-height: 30px; letter-spacing: .9px; font-weight: 350; }
.styles .opts span { height: 30px; }
.h1 { color: #3f4c66; }
.h2 { color: var(--blue); }
.tags .opts { padding: 1px 0 0 4px; letter-spacing: .25px; }
.tags .opts span { display: flex; align-items: center; gap: 11px; height: 29.500px; }
.scroll { width: 15px; border-left: 1px dotted var(--tan); display: grid; grid-template-rows: 20px 20px 21px; justify-items: center; align-items: center; }
.scroll .up { transform: rotate(180deg); color: var(--tan); }
.mr { width: 8px; height: 9px; }
.marks .gallery + .big { margin-left: 4px; }
.marks .big { width: 55px; margin-top: -6px; }
.mail { justify-content: center; }
.mail .big span { margin-top: 5px; }

.strip { height: 49px; border-bottom: 6px solid var(--tan); display: flex; align-items: flex-end; margin-left: 1px; }
.book { width: 193px; height: 43px; display: flex; align-items: flex-start; padding: 18px 0 0 12px; }
.book span { font-size: 19px; line-height: 20px; margin-left: 7px; width: 121px; height: 20px; letter-spacing: .6px; }
.book span + svg { margin-top: 8px; margin-left: 3px; }
.sections { display: flex; align-items: flex-end; gap: 2px; }
.tab { flex: none; height: 21px; border-radius: 7px 10px 0 0; display: flex; align-items: center; padding-left: 11px; border-top: 1px solid var(--tan); clip-path: polygon(4px 0, calc(100% - 6px) 0, 100% 100%, 0 100%); }
.tab em { font-style: normal; line-height: 18px; }
.w1 { width: 57px; padding-left: 15px; }
.w2 { width: 86.900px; }
.w3 { width: 126px; }
.tan { background: var(--tan); color: #5c5547; }
.tab.on { height: 27px; width: 89.500px; padding-top: 4px; }
.blue { background: conic-gradient(from 0deg at 1px 1px, transparent 75%, #fefdf9 0) 0 0/2px 4px, var(--blue); }
.mix { background: conic-gradient(from 0deg at 1px 1px, transparent 75%, var(--tan) 0) 0 0/2px 2px, conic-gradient(from 0deg at 1px 1px, transparent 75%, #a9b7ca 0) 1px 1px/4px 4px, var(--bg); }
.mix2 { background: conic-gradient(from 0deg at 1px 1px, transparent 75%, var(--tan) 0) 0 0/2px 2px, conic-gradient(from 0deg at 1px 1px, transparent 75%, #a9b7d6 0) 1px 1px/2px 2px, var(--bg); }
.slate { background: conic-gradient(from 0deg at 1px 1px, transparent 75%, var(--blue) 0) 0 0/2px 2px, conic-gradient(from 0deg at 1px 1px, transparent 75%, var(--blue) 0) 1px 1px/4px 4px, var(--tan); }
.plain { border: 1px solid var(--tan); border-bottom: 0; clip-path: none; padding-left: 10px; }
.dots { width: 53px; clip-path: none; gap: 8px; padding-left: 13px; color: var(--blue); border-top-color: var(--tan); font-weight: 700; }
.plus { width: 37px; height: 19px; border: 1px dotted var(--tan); border-bottom: 0; clip-path: none; padding-left: 12px; font-size: 15px; font-weight: 700; color: #46587a; margin-left: 4px; }
.psearch { margin-left: auto; width: 90px; height: 24px; margin-bottom: 3px; border: 1px solid var(--tan); border-right: 0; padding-left: 13px; line-height: 20px; font-size: 12px; letter-spacing: .2px; }

.work { flex: 1; display: flex; min-height: 0; margin-left: 1px; }
.pages { width: 321px; margin-top: -6px; display: flex; flex-direction: column; }
.add { height: 32px; background: var(--tan); display: flex; align-items: center; gap: 7px; padding-left: 10px; color: #5c5547; flex: none; }
.pages ul { flex: 1; padding-top: 11px; border-right: 1px solid var(--tan); background: conic-gradient(from 0deg at 1px 1px, transparent 75%, var(--tan) 0) 0 0/5px 4px, conic-gradient(from 0deg at 1px 1px, transparent 75%, var(--tan) 0) 2px 2px/5px 4px, var(--bg); }
.pages li { height: 24px; line-height: 24px; padding-left: 51px; overflow: hidden; }
.pages li.l2 { padding-left: 35px; }
.pages li.l1 { padding-left: 19px; display: flex; align-items: center; letter-spacing: .29px; }
.l1 i { font-style: normal; width: 12px; }
.co { margin-left: 3px; }
.en { letter-spacing: .42px; margin-left: 7px; }
.pages li.ch { height: 28px; line-height: 28px; letter-spacing: .23px; }
.pages li.ch:nth-child(28) { margin-top: -2px; }
.cw { width: 14px; height: 8px; margin-left: auto; margin-right: 6px; }
.pages li.sel { background: var(--bg); border: 1px solid var(--tan); border-right: 0; margin: 0 -1px 0 5px; padding-left: 45px; line-height: 22px; color: #5b6272; }

.page { flex: 1; padding-left: 94px; }
.page h1 { margin: 45px 0 0 -25px; padding-left: 25px; width: 563px; height: 87px; border-bottom: 1px solid var(--blue); box-shadow: 0 1px 0 #4a4b52; font-weight: 400; font-size: 51.700px; line-height: 78px; }
.page h1 .lt { font-family: Lato, sans-serif; font-weight: 300; font-size: 48.500px; letter-spacing: -.4px; margin-right: 1px; }
.stamp { display: flex; font-family: Lato, "Noto Sans CJK SC", sans-serif; font-size: 24.200px; color: #414c66; letter-spacing: -.1px; font-weight: 400; }
.stamp .d { width: 230px; line-height: 53px; }
.stamp .h { line-height: 39px; letter-spacing: -.4px; }
.bul { margin-top: 88px; font-size: 28.700px; }
.bul li { height: 49px; line-height: 49px; display: flex; align-items: center; font-family: Lato, "Noto Sans CJK SC", sans-serif; }
.bul li::before { content: ""; width: 9px; height: 9px; border-radius: 50%; background: var(--ink); margin-right: 9px; margin-left: 2px; flex: none; }
.a1, .a2, .a3, .a4, .a5 { font-family: Lato, sans-serif; font-size: 26.500px; }
.a1 { width: 230px; letter-spacing: .08px; }
.a2 { width: 50px; }
.a4 { letter-spacing: -1.500px; }
.q { margin: 69px 0 0; font-family: Lato, "Noto Sans CJK SC", sans-serif; font-size: 28.650px; line-height: 49px; }

.taskbar { position: relative; width: 124px; background: var(--ink); color: var(--bg); display: flex; flex-direction: column; }
.w { color: var(--bg); }
.top, .apps { display: flex; flex-direction: column; }
.top span { height: 40px; display: grid; place-items: center; }
.apps { padding-top: 2px; }
.apps span { height: 47px; display: grid; place-items: center; position: relative; }
.todo b { position: absolute; left: 66px; top: 25px; width: 17px; height: 17px; border: 1px solid var(--blue); border-radius: 50%; background: var(--ink); font-size: 12px; line-height: 14px; text-align: center; }
.bar::after { content: ""; position: absolute; right: 0; top: 5px; bottom: 4px; width: 2px; background: var(--blue); }
.act.bar::after { top: 1px; bottom: 1px; }
.act { padding: 1px 0; background: conic-gradient(from 0deg at 1px 1px, transparent 75%, var(--blue) 0) 0 0/3px 3px content-box; }
.tray { margin-top: 253px; display: flex; flex-direction: column; align-items: center; }
.bat { display: flex; gap: 2px; height: 22px; margin: 1px 2px 0 0; }
.bat span { width: 41px; height: 22px; border: 2px solid var(--bg); text-align: center; line-height: 17px; position: relative; }
.bat span::after { content: ""; position: absolute; right: -5px; top: 4px; width: 3px; height: 10px; background: var(--bg); }
.icons { display: grid; grid-template-columns: repeat(5, 24px); grid-auto-rows: 24px; place-items: center; margin: 4px 0 0 6px; }
.icons svg { width: 16px; height: 16px; }
.kb { margin-top: 8px; }
.eng { margin-top: 16px; line-height: 20px; }
.clock { display: flex; flex-direction: column; align-items: center; line-height: 19px; margin-top: 19px; position: relative; z-index: 2; letter-spacing: .1px; }
.act-c { margin-top: 19px; }
.mark { position: absolute; left: 0; top: 979px; }
.taskbar::after { content: ""; position: absolute; left: 0; right: 0; top: 1075px; height: 1px; background: var(--blue); }

.popup { position: absolute; left: 1580px; top: 393px; width: 216px; height: 150px; background: var(--ink); color: var(--bg); padding: 8px 0 0 8px; outline: 1px dotted var(--tan); outline-offset: 1px; clip-path: inset(-4px 0 -4px -4px); }
.p-head { display: flex; align-items: center; gap: 7px; height: 17px; letter-spacing: .2px; }
.p-line { width: 147px; height: 2px; margin-top: 7px; background: linear-gradient(90deg, var(--blue) 18px, var(--bg) 18px); }
.p-term { margin: 1px 0 0 8px; }
.cursor { position: absolute; left: 1834px; top: 488px; }

.meter { position: absolute; left: 1664px; top: 980px; display: flex; gap: 9px; }
.kps { width: 38px; padding-top: 11px; font-size: 9px; line-height: 14px; }
.kps span { display: flex; justify-content: space-between; padding-right: 2px; }
.kps em { font-style: normal; }
.upl { color: #5a74a4; }
.dnl { color: #9c8c6c; }
.ring { position: relative; }
.ring span { position: absolute; left: 7px; top: 7px; font-size: 24px; line-height: 34px; letter-spacing: -1.500px; }
.ring small { font-size: 9px; margin-left: 3px; }

.dock { position: absolute; left: 551px; top: 995px; width: 818px; height: 81px; border: 1px dotted var(--tan); display: flex; padding-left: 8px; }
.dock > span { width: 64px; height: 78px; display: grid; place-items: center; position: relative; }
.dock > .run::after { content: ""; position: absolute; left: 30px; top: 72px; width: 4px; height: 4px; border-radius: 50%; background: #2f3e60; }
.dock hr { width: 1px; height: 64px; border: 0; margin: 7px 15px 0 17px; background: repeating-linear-gradient(#698ec7 0 2px, #363435 2px 3px); }
.dock > .shot { width: 62px; padding-top: 6px; }
.dock > .trash { width: 46px; margin-left: 10px; padding-bottom: 4px; }
.cal { width: 52px; height: 52px; border-bottom: 1px dotted var(--tan); display: flex; flex-direction: column; align-items: center; }
.cal b { width: 52px; height: 16px; border-radius: 10px 10px 0 0; background: conic-gradient(from 0deg at 1px 1px, transparent 75%, #4a4641 0) 0 0/3px 2px, var(--tan); color: var(--bg); text-align: center; font-size: 11px; line-height: 16px; letter-spacing: 1px; }
.cal i { font-style: normal; font-weight: 350; font-size: 32px; line-height: 33px; }
```
